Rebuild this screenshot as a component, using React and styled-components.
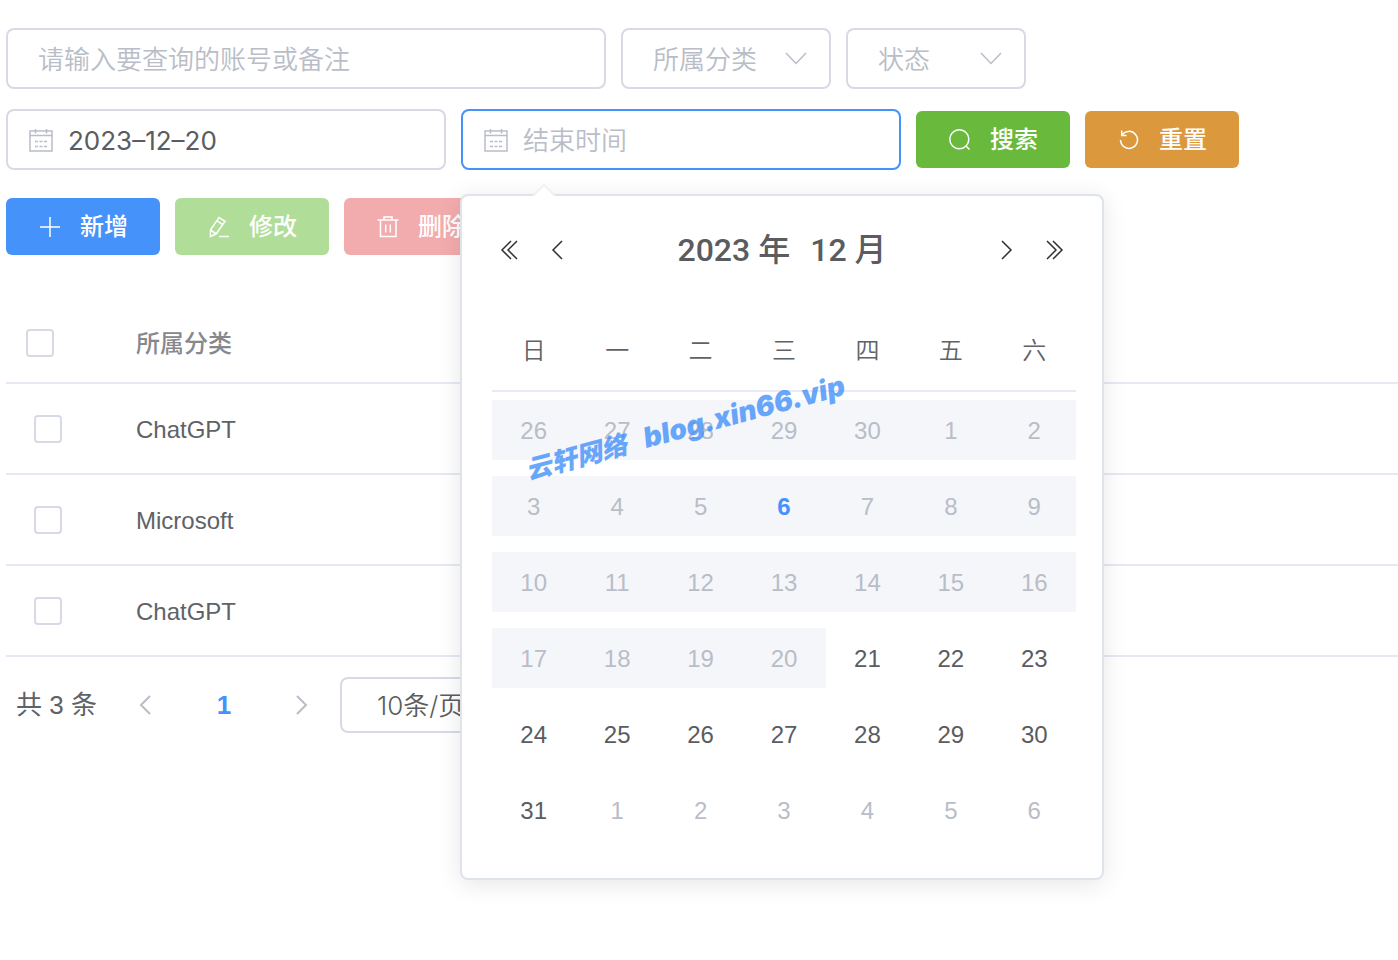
import { useState } from 'react'
import styled, { createGlobalStyle, css } from 'styled-components'


const GlobalStyle = createGlobalStyle`
    *, *::before, *::after {
        box-sizing: border-box;
    }

    body {
        margin: 0;

        background: #FFFFFF;
        color: #606266;
        font-family: "Liberation Sans", "Noto Sans CJK SC", sans-serif;
        font-size: 24px;
        line-height: 1;
    }

    button, input, select {
        margin: 0;

        font-family: inherit;
        line-height: inherit;
    }
`

const Page = styled.main`
    min-height: 100vh;
    padding: 28px 0 28px 6px;
`

const Filters = styled.form`
    display: flex;
    flex-direction: column;
    gap: 20px;
`

const FilterRow = styled.div`
    display: flex;
    flex-wrap: wrap;
    align-items: center;
    gap: 15px;
`

const Field = styled.div`
    position: relative;

    display: flex;
    align-items: center;
    gap: 15px;
    width: ${ ({ $width }) => $width }px;
    height: 61px;
    padding: 0 21px;

    background: #FFFFFF;
    border: 2px solid ${ ({ $active }) => $active ? '#4492FA' : '#D7DAE5' };
    border-radius: 8px;
`

const fieldText = css`
    flex: 1;
    min-width: 0;
    height: 100%;
    padding: 2px 0 0 ${ ({ $inset }) => $inset || 0 }px;

    background: none;
    border: 0;
    outline: 0;
    font-family: Inter, "Noto Sans CJK SC", sans-serif;
    font-size: 26px;
`

const TextInput = styled.input`
    ${ fieldText }

    color: #5A5C60;

    &::placeholder {
        color: #B9BDC7;
        font-weight: 350;
        opacity: 1;
    }
`

const Select = styled.select`
    ${ fieldText }

    appearance: none;
    color: ${ ({ $filled }) => $filled ? '#5A5C60' : '#B9BDC7' };
    font-weight: 350;
`

const Icon = styled.svg`
    flex: none;
    width: 24px;
    height: 24px;

    fill: none;
    stroke: ${ ({ $color }) => $color || 'currentColor' };
    stroke-width: ${ ({ $stroke }) => $stroke || 1.5 };
    pointer-events: none;
`

const tones = {
    primary: '#4492FA',
    success: '#69B93D',
    warning: '#DC983D',
    successPlain: '#B0DD98',
    dangerPlain: '#F3ACAE'
}

const Button = styled.button`
    display: inline-flex;
    align-items: center;
    gap: 18px;
    height: 57px;
    padding: 0 32px;

    background: ${ ({ $tone }) => tones[$tone] };
    border: 0;
    border-radius: 6px;
    color: #FFFFFF;
    font-size: 24px;
    font-weight: 500;
    white-space: nowrap;
`

const Actions = styled.div`
    display: flex;
    flex-wrap: wrap;
    gap: 15px;
    margin: 28px 0 48px;
`

const DataTable = styled.table`
    width: 100%;

    border-collapse: separate;
    border-spacing: 0;
    table-layout: fixed;
    text-align: left;

    th, td {
        height: 91px;
        padding: 2px 20px 0;

        border-bottom: 2px solid #E6E9F3;
    }

    th {
        height: 81px;

        color: #86888D;
        font-weight: 500;
    }

    th:first-child {
        width: 110px;
        padding-top: 0;
    }

    td:first-child {
        padding-top: 0;
        padding-left: 28px;
    }
`

const Checkbox = styled.input`
    display: block;
    width: 28px;
    height: 28px;
    margin: 0;

    appearance: none;
    background: #FFFFFF;
    border: 2px solid #D7DAE5;
    border-radius: 4px;

    &:checked {
        background: #4492FA;
        border-color: #4492FA;
    }
`

const Pagination = styled.nav`
    display: flex;
    align-items: center;
    padding: 20px 10px;

    font-size: 26px;
`

const Total = styled.span`
    margin-right: 28px;
`

const PageButton = styled.button`
    display: flex;
    align-items: center;
    justify-content: center;
    width: ${ ({ $wide }) => $wide ? 112 : 43 }px;
    height: 56px;
    padding: 0;

    background: none;
    border: 0;
    color: ${ ({ $wide }) => $wide ? '#4492FA' : '#B9BDC7' };
    font-size: 26px;
    font-weight: 700;
`

const PageSize = styled(Field)`
    height: 56px;
    margin-left: 17px;
`

const Popover = styled.div`
    position: absolute;
    top: 83px;
    left: -3px;
    z-index: 10;

    width: 644px;
    padding: 24px 26px 30px 30px;

    background: #FFFFFF;
    border: 2px solid #DFE3EA;
    border-radius: 8px;
    box-shadow: 0 4px 24px rgba( 0, 0, 0, 0.1 );
`

const Arrow = styled.svg`
    position: absolute;
    top: -12px;
    left: 70px;

    width: 24px;
    height: 13px;
`

const CalendarHeader = styled.div`
    display: flex;
    align-items: center;
    justify-content: space-between;
    height: 60px;
    margin-bottom: 30px;
    padding-right: 4px;
`

const HeaderGroup = styled.div`
    display: flex;
    gap: ${ ({ $gap }) => $gap }px;
    padding: 0 6px;
`

const IconButton = styled.button`
    display: flex;
    padding: 0;

    background: none;
    border: 0;
    color: #303133;
`

const PeriodButton = styled.button`
    padding: 0;

    background: none;
    border: 0;
    color: #5A5C60;
    font-family: Roboto, "Noto Sans CJK SC", sans-serif;
    font-size: 32px;
    font-weight: 500;
    white-space: pre;
`

const Calendar = styled.table`
    width: 100%;

    border-collapse: separate;
    border-spacing: 0;
    table-layout: fixed;
    text-align: center;

    th {
        height: 82px;
        padding: 2px 0 0;

        border-bottom: 2px solid #E6EBF5;
        font-weight: 350;
    }

    td {
        padding: 8px 0;
    }
`

const Day = styled.button`
    display: block;
    width: 100%;
    height: 60px;
    padding: 2px 0 0;

    background: none;
    border: 0;
    color: ${ ({ $other }) => $other ? '#B9BDC7' : '#5A5C60' };
    font-size: 24px;

    &:disabled {
        background: #F4F6FA;
        color: #B9BDC7;
    }

    ${ ({ $today }) => $today && css`
        &, &:disabled {
            color: #4492FA;
            font-weight: 700;
        }
    ` }
`

const Watermark = styled.div`
    position: absolute;
    top: 256px;
    left: 64px;

    display: flex;
    align-items: baseline;
    gap: 18px;

    color: #4492FA;
    font-family: Inter, "Noto Sans CJK SC", sans-serif;
    font-size: 28px;
    font-style: italic;
    font-weight: 900;
    line-height: 36px;
    opacity: 0.8;
    pointer-events: none;
    transform: rotate( -15deg );
    transform-origin: left center;
    white-space: nowrap;
`

const WatermarkName = styled.span`
    font-size: 26px;
`


const CalendarIcon = () => (
    <Icon viewBox="0 0 24 24" $color="#B9BDC7" aria-hidden="true">
        <path d="M1 3h22v20H1zM1 7.5h22M6.5 1v4.5M17.5 1v4.5" />
        <path d="M6 13.5h12M6 18.5h12" strokeDasharray="3 1.5" />
    </Icon>
)

const ChevronDown = () => (
    <Icon viewBox="0 0 24 24" $color="#B9BDC7" aria-hidden="true">
        <path d="M2 6l10 10.5L22 6" />
    </Icon>
)

const icons = {
    search: <><circle cx="11.3" cy="11.3" r="9.5" /><path d="M18 18l3.5 3.5" /></>,
    reset: <path d="M4.7 2.5v5h4.8M4.7 7.5A8.5 8.5 0 1 1 3.5 12" />,
    plus: <path d="M2 12h20M12 2v20" />,
    edit: <path d="M3.5 15L12 2.5l6 3.8L9.3 18.8 3.4 21.5zM3.5 15l5.8 3.8M9.8 5.7l6 3.9M12 21.5h10" />,
    trash: <path d="M1.5 5h21M8 5V2h8v3M4.5 5v16.5h15.5V5M9.7 9.5v8M14.3 9.5v8" />,
    prev: <path d="M16 3l-9 9 9 9" />,
    next: <path d="M8 3l9 9-9 9" />,
    prevYear: <path d="M13 3l-9 9 9 9M19 3l-9 9 9 9" />,
    nextYear: <path d="M5 3l9 9-9 9M11 3l9 9-9 9" />
}

const Glyph = ({ name, stroke }) => (
    <Icon viewBox="0 0 24 24" $stroke={ stroke } aria-hidden="true">{ icons[name] }</Icon>
)


const weekdays = [ '日', '一', '二', '三', '四', '五', '六' ]

const accounts = [
    { id: 1, category: 'ChatGPT' },
    { id: 2, category: 'Microsoft' },
    { id: 3, category: 'ChatGPT' }
]

/**
 * Build the six weeks shown for a month, starting on sunday
 *
 * @param {number} year
 * @param {number} month Zero based month
 */
const getWeeks = ( year, month ) => {
    const offset = new Date( year, month, 1 ).getDay() || 7

    return Array.from( { length: 6 }, ( _, week ) => (
        Array.from( { length: 7 }, ( _, day ) => new Date( year, month, 1 - offset + week * 7 + day ) )
    ) )
}

const start = new Date( 2023, 11, 20 )
const today = new Date( 2023, 11, 6 )


const DatePanel = () => (
    <Popover role="dialog" aria-label="结束时间">
        <Arrow viewBox="0 0 24 13" aria-hidden="true">
            <path d="M0 13L12 1l12 12z" fill="#FFFFFF" />
            <path d="M1 12L12 1l11 11" fill="none" stroke="#EBEEF5" strokeWidth="1.5" />
        </Arrow>
        <CalendarHeader>
            <HeaderGroup $gap={ 24 }>
                <IconButton type="button" aria-label="前一年"><Glyph name="prevYear" /></IconButton>
                <IconButton type="button" aria-label="上个月"><Glyph name="prev" /></IconButton>
            </HeaderGroup>
            <HeaderGroup $gap={ 20 }>
                <PeriodButton type="button">2023 年</PeriodButton>
                <PeriodButton type="button">12 月</PeriodButton>
            </HeaderGroup>
            <HeaderGroup $gap={ 24 }>
                <IconButton type="button" aria-label="下个月"><Glyph name="next" /></IconButton>
                <IconButton type="button" aria-label="后一年"><Glyph name="nextYear" /></IconButton>
            </HeaderGroup>
        </CalendarHeader>
        <Calendar>
            <thead>
                <tr>
                    { weekdays.map( day => <th key={ day } scope="col">{ day }</th> ) }
                </tr>
            </thead>
            <tbody>
                { getWeeks( 2023, 11 ).map( week => (
                    <tr key={ week[0].getTime() }>
                        { week.map( date => (
                            <td key={ date.getTime() }>
                                <Day
                                    type="button"
                                    disabled={ date <= start }
                                    $other={ date.getMonth() !== 11 }
                                    $today={ date.getTime() === today.getTime() }
                                >
                                    { date.getDate() }
                                </Day>
                            </td>
                        ) ) }
                    </tr>
                ) ) }
            </tbody>
        </Calendar>
        <Watermark>
            <WatermarkName>云轩网络</WatermarkName>
            <span>blog.xin66.vip</span>
        </Watermark>
    </Popover>
)


const App = () => {
    const [ startDate, setStartDate ] = useState( '2023–12–20' )

    return (
        <Page>
            <GlobalStyle />
            <Filters onSubmit={ event => event.preventDefault() }>
                <FilterRow>
                    <Field $width={ 600 }>
                        <TextInput $inset={ 9 } aria-label="账号或备注" placeholder="请输入要查询的账号或备注" />
                    </Field>
                    <Field $width={ 210 }>
                        <Select $inset={ 9 } aria-label="所属分类">
                            <option>所属分类</option>
                        </Select>
                        <ChevronDown />
                    </Field>
                    <Field $width={ 180 }>
                        <Select $inset={ 9 } aria-label="状态">
                            <option>状态</option>
                        </Select>
                        <ChevronDown />
                    </Field>
                </FilterRow>
                <FilterRow>
                    <Field $width={ 440 }>
                        <CalendarIcon />
                        <TextInput
                            aria-label="开始时间"
                            value={ startDate }
                            onChange={ event => setStartDate( event.target.value ) }
                        />
                    </Field>
                    <Field $width={ 440 } $active>
                        <CalendarIcon />
                        <TextInput aria-label="结束时间" placeholder="结束时间" />
                        <DatePanel />
                    </Field>
                    <Button type="submit" $tone="success"><Glyph name="search" />搜索</Button>
                    <Button type="reset" $tone="warning"><Glyph name="reset" />重置</Button>
                </FilterRow>
            </Filters>
            <Actions>
                <Button type="button" $tone="primary"><Glyph name="plus" />新增</Button>
                <Button type="button" $tone="successPlain" disabled><Glyph name="edit" />修改</Button>
                <Button type="button" $tone="dangerPlain" disabled><Glyph name="trash" />删除</Button>
            </Actions>
            <DataTable>
                <thead>
                    <tr>
                        <th scope="col"><Checkbox type="checkbox" aria-label="全选" /></th>
                        <th scope="col">所属分类</th>
                    </tr>
                </thead>
                <tbody>
                    { accounts.map( ({ id, category }) => (
                        <tr key={ id }>
                            <td><Checkbox type="checkbox" aria-label={ category } /></td>
                            <td>{ category }</td>
                        </tr>
                    ) ) }
                </tbody>
            </DataTable>
            <Pagination aria-label="分页">
                <Total>共 3 条</Total>
                <PageButton type="button" aria-label="上一页"><Glyph name="prev" stroke={ 2 } /></PageButton>
                <PageButton type="button" $wide>1</PageButton>
                <PageButton type="button" aria-label="下一页"><Glyph name="next" stroke={ 2 } /></PageButton>
                <PageSize $width={ 200 }>
                    <Select $inset={ 14 } $filled aria-label="每页条数">
                        <option>10条/页</option>
                    </Select>
                    <ChevronDown />
                </PageSize>
            </Pagination>
        </Page>
    )
}


export default App
